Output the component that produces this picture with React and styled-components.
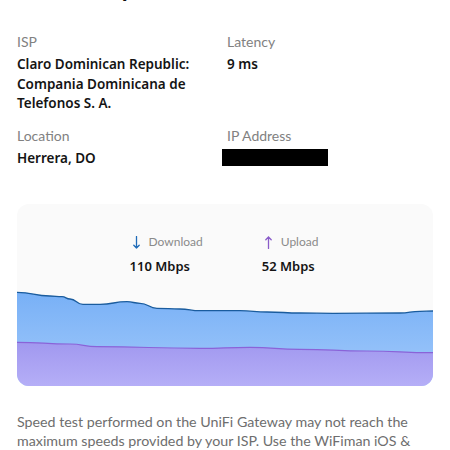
import React from "react";
import styled, { createGlobalStyle } from "styled-components";

const Global = createGlobalStyle`
  html, body { margin: 0; padding: 0; background: #ffffff; }
  body { font-family: Lato, "Liberation Sans", sans-serif; overflow: hidden; }
`;

const Page = styled.div`
  width: 450px;
  height: 450px;
  box-sizing: border-box;
  padding: 0 17px;
  overflow: hidden;
`;

const Title = styled.h1`
  margin: -26px 0 0;
  font-size: 24px;
  line-height: 28px;
  font-weight: 700;
  color: #111;
`;

const InfoGrid = styled.div`
  display: grid;
  grid-template-columns: 210px 1fr;
  row-gap: 12px;
  margin-top: 30px;
`;

const Field = styled.div`
  display: flex;
  flex-direction: column;
  gap: 3px;
`;

const Label = styled.div`
  font-size: 14px;
  line-height: 20px;
  color: #818181;
`;

const Value = styled.div`
  font-family: "Noto Sans", Lato, sans-serif;
  font-size: 13.5px;
  line-height: 19.5px;
  font-weight: 600;
  color: #141414;
  padding-right: 8px;
`;

const Redacted = styled.div`
  width: 106px;
  height: 17px;
  background: #000;
  margin-left: -5px;
`;

const Card = styled.div`
  margin-top: 36px;
  height: 182px;
  border-radius: 12px;
  background: #fafafa;
  overflow: hidden;
  display: flex;
  flex-direction: column;
`;

const Stats = styled.div`
  display: flex;
  justify-content: center;
  gap: 59px;
  padding-top: 30px;
  height: 52px;
  padding-right: 2px;
`;

const Stat = styled.div`
  display: flex;
  flex-direction: column;
  gap: 6px;
`;

const StatHead = styled.div`
  display: flex;
  align-items: center;
  gap: 9px;
  padding-left: 3px;
  font-size: 12px;
  line-height: 16px;
  color: #8a8a8a;
`;

const StatValue = styled.div`
  font-family: "Noto Sans", Lato, sans-serif;
  font-size: 13px;
  line-height: 20px;
  font-weight: 600;
  color: #141414;
`;

const Chart = styled.svg`
  display: block;
  width: 416px;
  height: 100px;
`;

const Note = styled.p`
  margin: 26px 0 0;
  font-size: 14.25px;
  line-height: 19px;
  color: #6e6e6e;
`;

const Arrow = ({ up, color }) => (
  <svg width="7" height="13" viewBox="0 0 7 13">
    {up ? (
      <path d="M3.5 12.5V1M0.8 3.8L3.5 1L6.2 3.8" fill="none" stroke={color} strokeWidth="1.3" strokeLinecap="round" strokeLinejoin="round" />
    ) : (
      <path d="M3.5 0.5V12M0.8 9.2L3.5 12L6.2 9.2" fill="none" stroke={color} strokeWidth="1.3" strokeLinecap="round" strokeLinejoin="round" />
    )}
  </svg>
);

const down = [
  [0, 6.3], [33, 10], [45, 10.7], [53, 13], [66, 18.3], [83, 18.3], [110, 15.7], [123, 17.3],
  [140, 22.3], [163, 23], [183, 24.7], [223, 24.7], [250, 26], [283, 27], [316, 27.3],
  [383, 27], [403, 25.3], [416, 25],
];
const up = [
  [0, 56.3], [53, 58], [80, 60.7], [183, 62.3], [233, 61.3], [283, 63.3], [350, 65], [416, 66.7],
];

function smooth(pts) {
  let d = `M${pts[0][0]} ${pts[0][1]}`;
  for (let i = 1; i < pts.length; i++) {
    const [x0, y0] = pts[i - 1];
    const [x1, y1] = pts[i];
    const mx = (x0 + x1) / 2;
    d += ` C${mx} ${y0} ${mx} ${y1} ${x1} ${y1}`;
  }
  return d;
}

export default function App() {
  const dLine = smooth(down);
  const uLine = smooth(up);
  return (
    <Page>
      <Global />
      <Title>Internet Speed</Title>
      <InfoGrid>
        <Field>
          <Label>ISP</Label>
          <Value>Claro Dominican Republic: Compania Dominicana de Telefonos S. A.</Value>
        </Field>
        <Field>
          <Label>Latency</Label>
          <Value>9 ms</Value>
        </Field>
        <Field>
          <Label>Location</Label>
          <Value>Herrera, DO</Value>
        </Field>
        <Field>
          <Label>IP Address</Label>
          <Redacted />
        </Field>
      </InfoGrid>
      <Card>
        <Stats>
          <Stat>
            <StatHead>
              <Arrow color="#1f6bb8" />
              Download
            </StatHead>
            <StatValue>110 Mbps</StatValue>
          </Stat>
          <Stat>
            <StatHead>
              <Arrow up color="#8a5cc9" />
              Upload
            </StatHead>
            <StatValue>52 Mbps</StatValue>
          </Stat>
        </Stats>
        <Chart viewBox="0 0 416 100" preserveAspectRatio="none">
          <defs>
            <linearGradient id="dg" x1="0" y1="0" x2="0" y2="1">
              <stop offset="0" stopColor="#78b0f6" />
              <stop offset="1" stopColor="#a2cafb" />
            </linearGradient>
            <linearGradient id="ug" x1="0" y1="0" x2="0" y2="1">
              <stop offset="0" stopColor="#a198ef" />
              <stop offset="1" stopColor="#b5aef7" />
            </linearGradient>
          </defs>
          <path d={`${dLine} L416 100 L0 100 Z`} fill="url(#dg)" />
          <path d={dLine} fill="none" stroke="#1a5c9e" strokeWidth="1.3" />
          <path d={`${uLine} L416 100 L0 100 Z`} fill="url(#ug)" />
          <path d={uLine} fill="none" stroke="#8a63d8" strokeWidth="1.2" />
        </Chart>
      </Card>
      <Note>
        Speed test performed on the UniFi Gateway may not reach the maximum speeds provided by your ISP. Use the WiFiman iOS &amp; Android app for more accurate results.
      </Note>
    </Page>
  );
}
